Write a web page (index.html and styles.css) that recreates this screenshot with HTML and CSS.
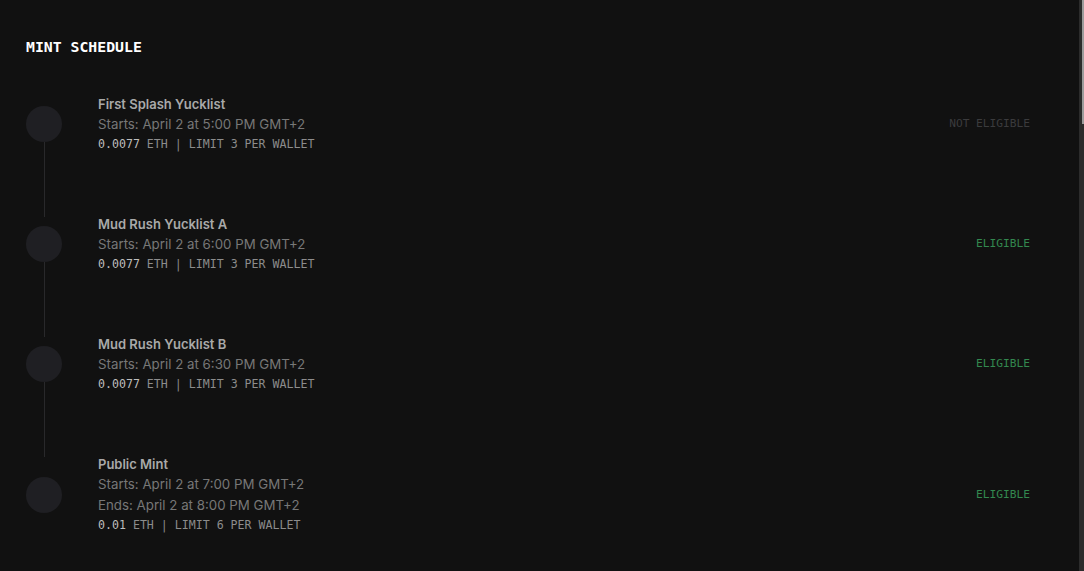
FILE: index.html
```html
<!DOCTYPE html>
<html lang="en">
<head>
<meta charset="utf-8">
<title>Mint Schedule</title>
<link rel="stylesheet" href="styles.css">
</head>
<body>
<main class="page">
  <h2 class="heading">MINT SCHEDULE</h2>
  <ol class="timeline">
    <li class="phase">
      <span class="dot"></span>
      <div class="info">
        <div class="title">First Splash Yucklist</div>
        <div class="time">Starts: April 2 at 5:00 PM GMT+2</div>
        <div class="price"><span class="num">0.0077</span> ETH | LIMIT 3 PER WALLET</div>
      </div>
      <span class="status status-no">NOT ELIGIBLE</span>
    </li>
    <li class="phase">
      <span class="dot"></span>
      <div class="info">
        <div class="title">Mud Rush Yucklist A</div>
        <div class="time">Starts: April 2 at 6:00 PM GMT+2</div>
        <div class="price"><span class="num">0.0077</span> ETH | LIMIT 3 PER WALLET</div>
      </div>
      <span class="status status-yes">ELIGIBLE</span>
    </li>
    <li class="phase">
      <span class="dot"></span>
      <div class="info">
        <div class="title">Mud Rush Yucklist B</div>
        <div class="time">Starts: April 2 at 6:30 PM GMT+2</div>
        <div class="price"><span class="num">0.0077</span> ETH | LIMIT 3 PER WALLET</div>
      </div>
      <span class="status status-yes">ELIGIBLE</span>
    </li>
    <li class="phase phase-last">
      <span class="dot"></span>
      <div class="info">
        <div class="title">Public Mint</div>
        <div class="time">Starts: April 2 at 7:00 PM GMT+2</div>
        <div class="time">Ends: April 2 at 8:00 PM GMT+2</div>
        <div class="price"><span class="num">0.01</span> ETH | LIMIT 6 PER WALLET</div>
      </div>
      <span class="status status-yes">ELIGIBLE</span>
    </li>
  </ol>
</main>
<div class="scrollbar"><div class="thumb"></div></div>
</body>
</html>
```

FILE: styles.css
```css
html, body {
  margin: 0;
  padding: 0;
  background: #111111;
  height: 100%;
  overflow: hidden;
}

.page {
  padding: 37px 54px 0 26px;
  font-family: "Inter", "Liberation Sans", sans-serif;
}

.heading {
  margin: 0;
  font-family: "DejaVu Sans Mono", monospace;
  font-weight: bold;
  font-size: 14.8px;
  line-height: 20px;
  color: #ffffff;
}

.timeline {
  list-style: none;
  margin: 7px 0 0 0;
  padding: 0;
}

.phase {
  display: flex;
  align-items: center;
  gap: 36px;
  padding: 30px 0;
}

.dot {
  position: relative;
  flex: none;
  width: 36px;
  height: 36px;
  border-radius: 50%;
  background: #1f1f23;
}

.dot::after {
  content: "";
  position: absolute;
  left: 17.5px;
  top: 36px;
  width: 1px;
  height: 75px;
  background: #29292b;
}

.phase-last .dot::after {
  display: none;
}

.info {
  flex: 1;
}

.title {
  font-weight: 600;
  font-size: 13px;
  line-height: 20px;
  color: #a9a9a9;
}

.time {
  font-size: 13.3px;
  line-height: 21px;
  color: #777777;
}

.price {
  font-family: "DejaVu Sans Mono", monospace;
  font-size: 11.6px;
  line-height: 19px;
  color: #8c8c8c;
}

.num {
  color: #bdbdbd;
}

.status {
  font-family: "DejaVu Sans Mono", monospace;
  font-size: 11.2px;
  line-height: 20px;
}

.status-no {
  color: #3b3b3d;
}

.status-yes {
  color: #33884f;
}

.scrollbar {
  position: fixed;
  top: 0;
  right: 0;
  width: 5px;
  height: 100%;
  background: #2c2c2c;
}

.thumb {
  margin-left: 3px;
  width: 2px;
  height: 124px;
  background: #9c9c9c;
}
```
